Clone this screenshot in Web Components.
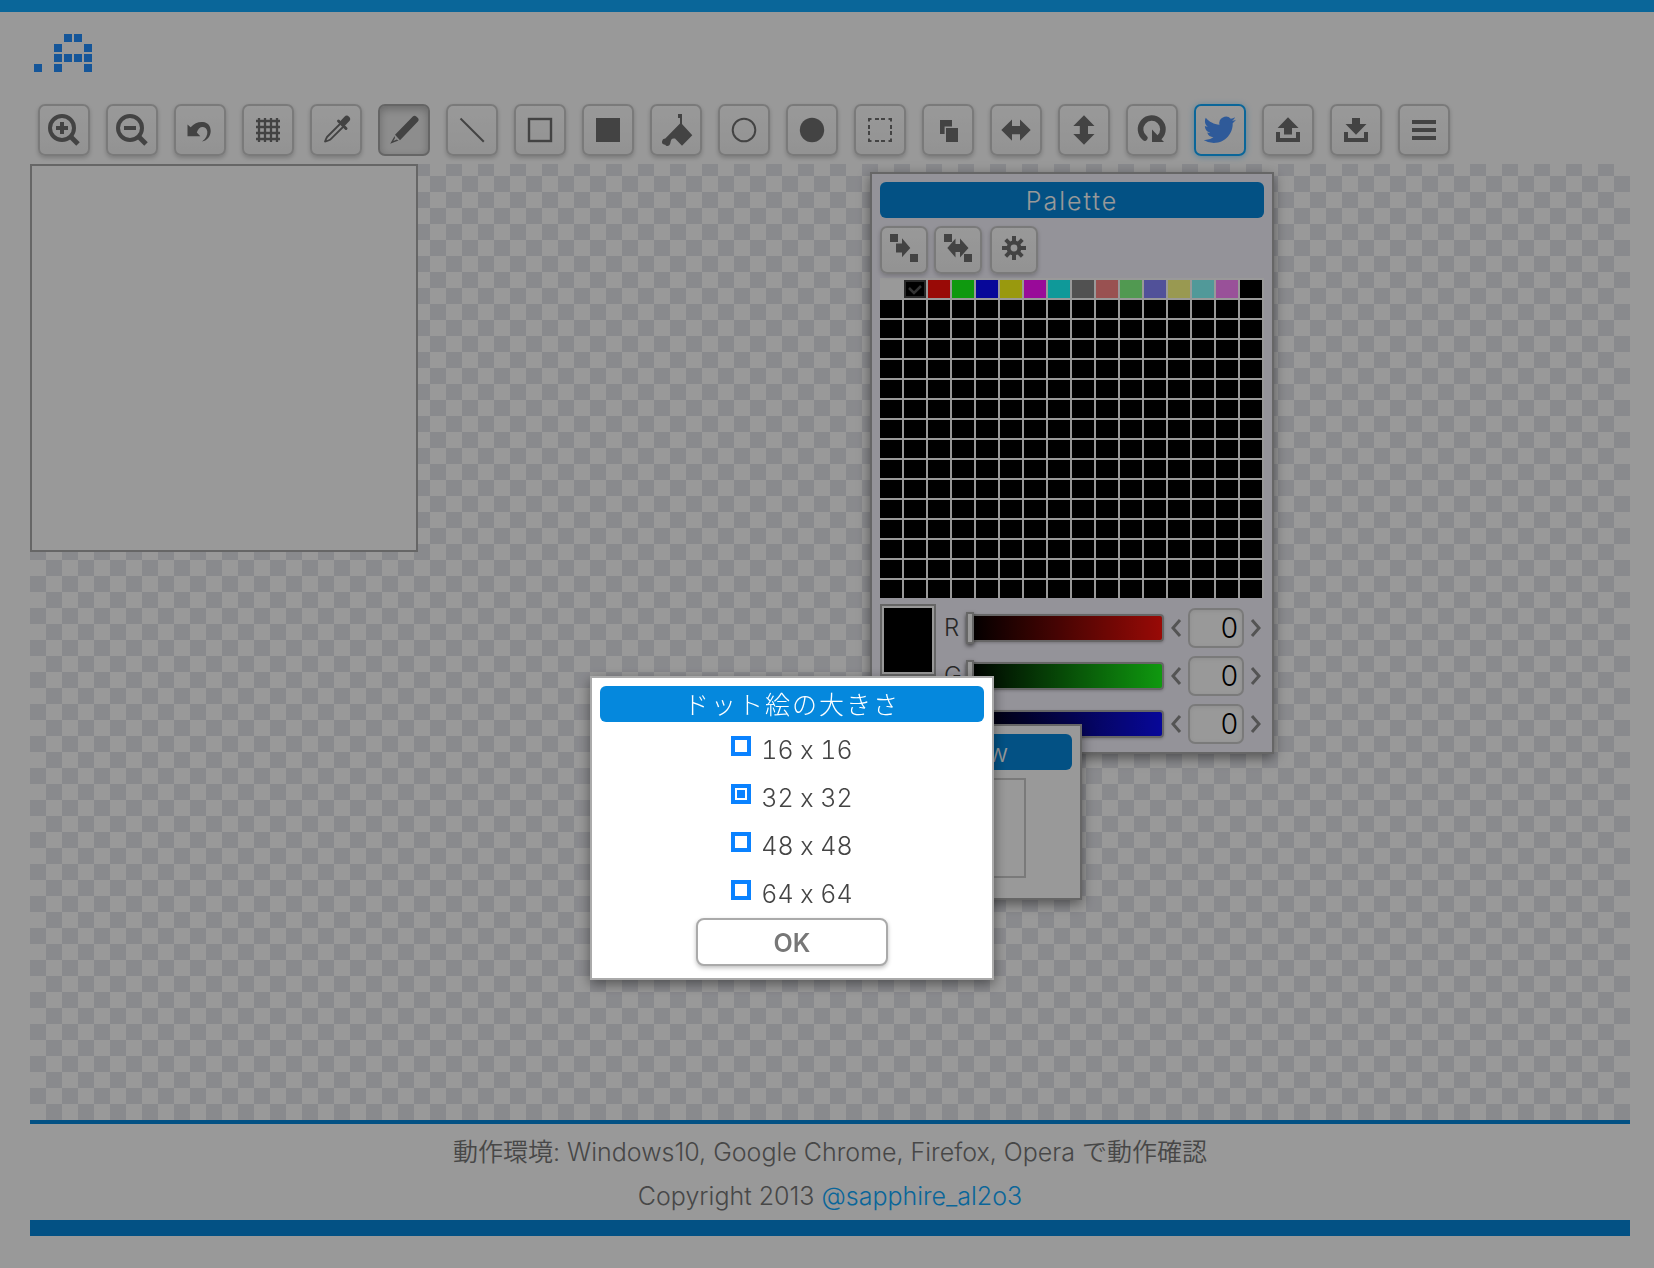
<!DOCTYPE html>
<html lang="ja">
<head>
<meta charset="utf-8">
<title>.A</title>
<style>
  html, body { margin: 0; }
  body {
    --accent: #11aaff;
    --title: #0588dd;
    --line: #aaa;
    --soft-line: #ccc;
    --ink: #717171;
    background: #fff;
    color: #444;
    font: 350 25px/36px Inter, "Noto Sans CJK JP", sans-serif;
    font-feature-settings: "calt" 0;
  }
</style>
</head>
<body>
<dot-app></dot-app>

<script>
const define = (name, html, setup) => {
  const template = document.createElement('template');
  template.innerHTML = html;
  customElements.define(name, class extends HTMLElement {
    connectedCallback() {
      if (this.shadowRoot) return;
      this.attachShadow({ mode: 'open' }).append(template.content.cloneNode(true));
      if (setup) setup(this, this.shadowRoot);
    }
  });
};

const lens = '<circle cx="24" cy="24" r="12" fill="none" stroke="currentColor" stroke-width="4"/><path d="M33 33L40 40" stroke="currentColor" stroke-width="5"/>';
const horizontal = 'M11.3 26L22 15.5V22H30V15.5L40.7 26L30 36.7V30.2H22V36.7Z';
const icons = {
  zoomIn: lens + '<path d="M18 24H30M24 18V30" stroke="currentColor" stroke-width="4"/>',
  zoomOut: lens + '<path d="M18 24H30" stroke="currentColor" stroke-width="4"/>',
  undo: '<path d="M13.5 20.5L16.7 23.3C20 19 25 17.5 29 18C34 18.5 36.7 22 36.7 27C36.7 32 33.5 36.5 28 37.5C32 34.5 33.7 31 33.3 27.5C32.9 24 30 22.7 28 23C25.5 23.3 23.8 25.5 22.8 28.6L26.3 32.3H13.5Z"/>',
  grid: '<path d="M17 14V38M23 14V38M29 14V38M35 14V38M14 17H38M14 23H38M14 29H38M14 35H38" stroke="currentColor" stroke-width="2.3"/>',
  dropper: '<path d="M30 20L17 33Q16 35 15 37.5Q18 37 20 35.8L33.5 22.5" fill="none" stroke="currentColor" stroke-width="1.8" stroke-linejoin="round"/><path d="M28.5 17L36 24.5" stroke="currentColor" stroke-width="3" stroke-linecap="round"/><path d="M33.5 18.5L36.8 15" stroke="currentColor" stroke-width="6.5" stroke-linecap="round"/>',
  pencil: '<path d="M17 30.8L34.8 12.5Q36.5 11 38.3 12.4L40.2 14.3Q41.4 16 39.9 17.5L22 36.2Z"/><path d="M16.6 32L12.2 39.8L20.6 36.4L18.6 35.6L15.4 37L17 34Z"/>',
  line: '<path d="M14.5 14.5L37.8 37.8" stroke="currentColor" stroke-width="2"/>',
  rect: '<rect x="15" y="15" width="22" height="22" fill="none" stroke="currentColor" stroke-width="2.4"/>',
  rectFill: '<rect x="14" y="14" width="24" height="24"/>',
  bucket: '<path d="M28 10H32V20L42.3 31.3L32 41.8L25 34.6C22 33.8 20.8 35.5 20.5 38.5C20 42.8 16 42.5 15.3 40.7C13 41 11.2 38.8 12.3 36.8C12.6 35 14 34.8 15.3 34.5L30 19.5V14H28Z"/>',
  circle: '<circle cx="26" cy="26" r="11.3" fill="none" stroke="currentColor" stroke-width="2"/>',
  circleFill: '<circle cx="26" cy="26" r="12.2"/>',
  select: '<path d="M15 15H37M37 15V37M37 37H15M15 37V15" fill="none" stroke="currentColor" stroke-width="2" stroke-dasharray="2.5 3.5 4 2 4 3.5 2.5 0"/><path d="M14 14h2v2h-2zM36 14h2v2h-2zM14 36h2v2h-2zM36 36h2v2h-2z"/>',
  copy: '<path d="M18 16H30V22.6H22.6V30H18ZM24 24H36V38H24Z"/>',
  flipH: `<path d="${horizontal}"/>`,
  flipV: `<path transform="rotate(90 26 26)" d="${horizontal}"/>`,
  rotate: '<path d="M18.8 34A11.2 11.2 0 1 1 33.4 33.4" fill="none" stroke="currentColor" stroke-width="5.6" stroke-linecap="round"/><path d="M26 25.5L38 38H26Z"/>',
  bird: '<path transform="translate(9.6 9.6) scale(1.35)" d="M23.953 4.57a10 10 0 01-2.825.775 4.958 4.958 0 002.163-2.723c-.951.555-2.005.959-3.127 1.184a4.92 4.92 0 00-8.384 4.482C7.69 8.095 4.067 6.13 1.64 3.162a4.822 4.822 0 00-.666 2.475c0 1.71.87 3.213 2.188 4.096a4.904 4.904 0 01-2.228-.616v.06a4.923 4.923 0 003.946 4.827 4.996 4.996 0 01-2.212.085 4.936 4.936 0 004.604 3.417 9.867 9.867 0 01-6.102 2.105c-.39 0-.779-.023-1.17-.067a13.995 13.995 0 007.557 2.209c9.053 0 13.998-7.496 13.998-13.985 0-.21 0-.42-.015-.63A9.935 9.935 0 0024 4.59z"/>',
  upload: '<path d="M14 28H18V34H34V28H38V38H14ZM26 13.3L36.6 24H30V30.5H22V24H15.6Z"/>',
  download: '<path d="M14 28H18V34H34V28H38V38H14ZM22 14H30V20H36.5L26 30.7L15.5 20H22Z"/>',
  menu: '<path d="M14 16H38V20H14ZM14 24H38V28H14ZM14 32H38V36H14Z"/>',
  copyColor: '<path d="M10 8H18V16H10ZM30 28H38V36H30ZM16 17.5H22V12.3L30.3 22L22 31.2V26.5H16Z"/>',
  swapColor: '<path d="M10 8H18V16H10ZM30 28H38V36H30ZM13.3 22L21.5 12.5V18H26V12.5L34.5 22L26 31.5V26H21.5V31.5Z"/>',
  gear: '<circle cx="24" cy="22" r="5.4" fill="none" stroke="currentColor" stroke-width="4"/><path d="M24 10V17M24 27V34M12 22H19M29 22H36M15.7 13.7L20.3 18.3M27.7 25.7L32.3 30.3M32.3 13.7L27.7 18.3M20.3 25.7L15.7 30.3" stroke="currentColor" stroke-width="4"/>'
};

/* Square button that carries one icon; its edge attribute is the outer size. */
define('icon-button', `
<style>
  :host { display: block; flex: none; width: var(--edge, 52px); height: var(--edge, 52px); color: var(--ink); }
  button { display: block; box-sizing: border-box; width: 100%; height: 100%; padding: 0; color: inherit;
    border: 2px solid var(--soft-line); border-radius: 7px; background: linear-gradient(#fff, #f5f5f5); box-shadow: 0 2px 4px rgba(0,0,0,.2); cursor: pointer; }
  svg { display: block; width: 100%; height: 100%; fill: currentColor; }
  :host([active]) button { border-color: #a8a8a8; background: #ececec; box-shadow: inset 0 3px 9px rgba(0,0,0,.25); }
  :host([social]) { color: #4f97ff; }
  :host([social]) button { border-color: var(--accent); box-shadow: 0 1px 6px rgba(17,170,255,.45); }
</style>
<button type="button"><svg aria-hidden="true"></svg></button>`, (host, root) => {
  const edge = Number(host.getAttribute('edge') || 52);
  host.style.setProperty('--edge', edge + 'px');
  const svg = root.querySelector('svg');
  svg.setAttribute('viewBox', `2 2 ${edge - 4} ${edge - 4}`);
  svg.innerHTML = icons[host.getAttribute('icon')];
  root.querySelector('button').setAttribute('aria-label', host.getAttribute('label'));
});

define('dot-logo', `
<style>
  :host { display: block; padding: 22px 4px 30px; }
  svg { display: block; fill: #2490ff; }
</style>
<svg width="58" height="40" role="img" aria-label=".A"></svg>`, (host, root) => {
  const dots = [[0, 3], [2, 3], [2, 2], [2, 1], [3, 0], [4, 0], [5, 1], [5, 2], [5, 3], [3, 2], [4, 2]];
  root.querySelector('svg').innerHTML = dots.map(([x, y]) => `<rect x="${x * 10}" y="${y * 10}" width="8" height="8"/>`).join('');
});

define('tool-bar', `
<style>
  :host { display: flex; flex-wrap: wrap; gap: 16px; padding: 0 8px 8px; }
</style>`, (host, root) => {
  const tools = [['zoomIn', '拡大'], ['zoomOut', '縮小'], ['undo', '元に戻す'], ['grid', 'グリッド'], ['dropper', 'スポイト'], ['pencil', 'ペン', 'active'],
    ['line', '直線'], ['rect', '四角'], ['rectFill', '四角塗り'], ['bucket', '塗りつぶし'], ['circle', '円'], ['circleFill', '円塗り'], ['select', '選択'],
    ['copy', 'コピー'], ['flipH', '左右反転'], ['flipV', '上下反転'], ['rotate', '回転'], ['bird', 'ツイート', 'social'], ['upload', '開く'], ['download', '保存'], ['menu', 'メニュー']];
  for (const [icon, label, state] of tools) {
    const item = document.createElement('icon-button');
    item.setAttribute('icon', icon);
    item.setAttribute('label', label);
    if (state) item.setAttribute(state, '');
    root.append(item);
  }
});

/* Framed window with a blue title bar; the body is slotted. */
define('float-window', `
<style>
  :host { display: block; box-sizing: border-box; padding: 8px; border: 2px solid var(--line); background: var(--panel, #fff); box-shadow: 0 4px 12px rgba(0,0,0,.45); }
  h2 { margin: 0; padding-top: 2px; border-radius: 6px; background: var(--title); color: #fff; font-size: 25px; font-weight: 300; line-height: 34px; letter-spacing: 2px; text-align: center; }
</style>
<h2><slot name="title"></slot></h2>
<slot></slot>`);

define('color-grid', `
<style>
  :host { display: grid; grid-template-columns: repeat(16, 22px); grid-auto-rows: 18px; gap: 2px; padding: 2px 0 0; background: #fff; }
  button { display: block; padding: 0; border: 0; background: var(--c, #000); }
  button.on { border: 2px solid #444; }
  svg { display: block; width: 18px; height: 14px; fill: none; stroke: #555; stroke-width: 2.5; }
</style>`, (host, root) => {
  const colors = ['#fff', '#000', '#ff110b', '#1aff1a', '#0d0dff', '#ffff18', '#ff11ff', '#1affff', '#888', '#ff8888', '#88ff88', '#8888ff', '#ffff88', '#88ffff', '#ff88ff'];
  for (let i = 0; i < 256; i++) {
    const cell = document.createElement('button');
    cell.type = 'button';
    cell.ariaLabel = '色 ' + i;
    if (colors[i]) cell.style.setProperty('--c', colors[i]);
    if (i === 1) {
      cell.className = 'on';
      cell.innerHTML = '<svg viewBox="0 0 18 14" aria-hidden="true"><path d="M3 6L8 11L15 4"/></svg>';
    }
    root.append(cell);
  }
});

define('color-slider', `
<style>
  :host { display: flex; align-items: center; height: 40px; }
  label { width: 30px; padding-left: 8px; box-sizing: border-box; font-size: 24px; }
  input[type=range] { -webkit-appearance: none; appearance: none; flex: 1; min-width: 0; height: 28px; margin: 0 8px 0 0; box-sizing: border-box;
    border: 2px solid var(--line); border-radius: 4px; background: linear-gradient(to right, #000, var(--c)); box-shadow: 0 1px 3px rgba(0,0,0,.2); }
  input[type=range]::-webkit-slider-thumb { -webkit-appearance: none; box-sizing: border-box; width: 8px; height: 32px; margin-left: -2px; border: 2px solid var(--line); background: #fff; box-shadow: 0 2px 4px rgba(0,0,0,.5); }
  .step { padding: 0; border: 0; background: none; width: 8px; height: 16px; }
  .step svg { display: block; overflow: visible; fill: none; stroke: #8c8c8c; stroke-width: 3; }
  input[type=text] { box-sizing: border-box; width: 56px; height: 40px; margin: 0 8px; padding: 0 4px; border: 2px solid var(--soft-line); border-radius: 7px;
    background: #fff; color: #000; font: inherit; font-size: 28px; text-align: right; box-shadow: inset 0 1px 4px rgba(0,0,0,.08); }
</style>
<label for="value"></label>
<input id="value" type="range" min="0" max="255" value="0">
<button class="step" type="button" aria-label="減らす"><svg width="8" height="16"><path d="M8 0L1 8L8 16"/></svg></button>
<input id="number" type="text" inputmode="numeric" value="0">
<button class="step" type="button" aria-label="増やす"><svg width="8" height="16"><path d="M0 0L7 8L0 16"/></svg></button>`, (host, root) => {
  const name = host.getAttribute('name');
  root.querySelector('label').textContent = name;
  root.querySelector('#number').setAttribute('aria-label', name);
  host.style.setProperty('--c', host.getAttribute('color'));
});

define('palette-panel', `
<style>
  :host { display: block; }
  .tools { display: flex; gap: 6px; padding: 8px 0 4px; }
  .tools :last-child { margin-left: 2px; }
  .mix { display: flex; padding: 6px 4px 0 0; }
  .now { flex: none; width: 48px; height: 64px; align-self: flex-start; border: 2px solid var(--line); padding: 2px; background: #000 content-box; outline: 2px solid #fff; outline-offset: -4px; }
  .sliders { display: flex; flex: 1; flex-direction: column; gap: 8px; padding-top: 4px; }
</style>
<div class="tools">
  <icon-button edge="48" icon="copyColor" label="色をコピー"></icon-button>
  <icon-button edge="48" icon="swapColor" label="色を入れ替え"></icon-button>
  <icon-button edge="48" icon="gear" label="設定"></icon-button>
</div>
<color-grid></color-grid>
<div class="mix">
  <div class="now"></div>
  <div class="sliders">
    <color-slider name="R" color="#ff110b"></color-slider>
    <color-slider name="G" color="#1aff1a"></color-slider>
    <color-slider name="B" color="#0d0dff"></color-slider>
  </div>
</div>`);

define('work-area', `
<style>
  :host { display: block; position: relative; flex: 1;
    background: repeating-conic-gradient(#fff 0 25%, #e5e6ec 0 50%) 0 -4px / 32px 32px; }
  canvas.sheet { display: block; width: 384px; height: 384px; border: 2px solid var(--line); background: #fff; }
  .palette, .preview { position: absolute; }
  .palette { left: 840px; top: 8px; width: 404px; --panel: #f7f5ff; }
  .preview { left: 802px; top: 560px; width: 250px; }
  .view { display: flex; justify-content: center; padding: 8px 0 12px; }
  .view canvas { width: 134px; height: 96px; border: 2px solid var(--soft-line); background: #fff; }
</style>
<canvas class="sheet"></canvas>
<float-window class="palette"><span slot="title">Palette</span><palette-panel></palette-panel></float-window>
<float-window class="preview"><span slot="title">Preview</span><div class="view"><canvas></canvas></div></float-window>`);

define('page-footer', `
<style>
  :host { display: block; border-top: 4px solid var(--title); border-bottom: 16px solid var(--title); padding: 6px 0 2px; color: #777; text-align: center; }
  p { margin: 0; line-height: 44px; }
  a { color: var(--accent); text-decoration: none; }
</style>
<p>動作環境: Windows10, Google Chrome, Firefox, Opera で動作確認</p>
<p>Copyright 2013 <a href="#">@sapphire_al2o3</a></p>`);

define('size-option', `
<style>
  :host { display: block; height: 48px; }
  label { display: flex; align-items: center; gap: 10px; height: 56px; margin-bottom: -8px; font-variant-numeric: tabular-nums; }
  input { -webkit-appearance: none; appearance: none; box-sizing: border-box; width: 20px; height: 20px; margin: 0 0 8px; border: 4px solid #0a82ff; border-radius: 0; background: #fff; }
  input:checked { background: linear-gradient(#0a82ff, #0a82ff) center / 8px 8px no-repeat #fff; }
</style>
<label><input type="radio"><slot></slot></label>`, (host, root) => {
  root.querySelector('input').checked = host.hasAttribute('checked');
});

define('size-dialog', `
<style>
  :host { position: fixed; inset: 0; background: rgba(0,0,0,.4); }
  float-window { position: absolute; left: 590px; top: 676px; width: 404px; }
  .options { display: flex; flex-direction: column; align-items: center; }
  .ok { display: block; box-sizing: border-box; width: 192px; height: 48px; margin: 4px auto; padding: 2px 0 0; border: 2px solid var(--line); border-radius: 8px; background: #fff;
    color: #777; font: inherit; font-weight: 600; box-shadow: 0 2px 4px rgba(0,0,0,.25); }
</style>
<float-window role="dialog" aria-modal="true">
  <span slot="title">ドット絵の大きさ</span>
  <div class="options">
    <size-option>16 x 16</size-option>
    <size-option checked>32 x 32</size-option>
    <size-option>48 x 48</size-option>
    <size-option>64 x 64</size-option>
  </div>
  <button class="ok" type="button">OK</button>
</float-window>`);

define('dot-app', `
<style>
  :host { display: flex; flex-direction: column; box-sizing: border-box; min-height: 100vh; padding: 0 24px 32px 30px; border-top: 12px solid var(--accent); }
</style>
<dot-logo></dot-logo>
<tool-bar></tool-bar>
<work-area></work-area>
<page-footer></page-footer>
<size-dialog></size-dialog>`);
</script>
</body>
</html>
